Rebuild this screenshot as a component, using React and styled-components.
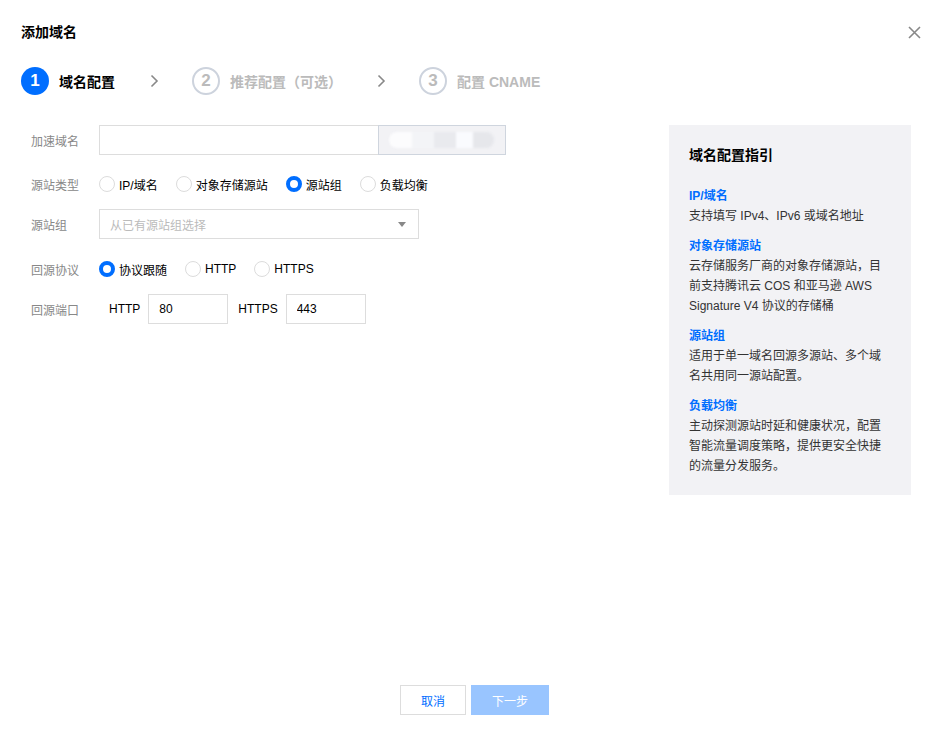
import React from "react";
import styled, { createGlobalStyle, css } from "styled-components";

const Global = createGlobalStyle`
  html, body { margin: 0; padding: 0; background: #fff; }
  body { font-family: "Liberation Sans", "Noto Sans CJK SC", sans-serif; color: #000; }
  * { box-sizing: border-box; }
`;

const BLUE = "#006eff";

const Dialog = styled.div`
  width: 939px;
  height: 733px;
  display: flex;
  flex-direction: column;
  padding: 0 18px 0 21px;
  position: relative;
`;

const Header = styled.div`
  display: flex;
  align-items: center;
  justify-content: space-between;
  padding-top: 20px;
  height: 44px;
`;

const Title = styled.h1`
  margin: 0;
  font-size: 14px;
  font-weight: 700;
  line-height: 24px;
`;

const CloseBtn = styled.button`
  border: none;
  background: none;
  padding: 0;
  width: 14px;
  height: 14px;
  display: flex;
  align-items: center;
  justify-content: center;
  cursor: pointer;
`;

const Steps = styled.div`
  display: flex;
  align-items: center;
  margin-top: 23px;
  height: 28px;
`;

const Step = styled.div`
  display: flex;
  align-items: center;
  gap: 10px;
`;

const StepNum = styled.span`
  width: 28px;
  height: 28px;
  border-radius: 50%;
  display: flex;
  align-items: center;
  justify-content: center;
  font-size: 17px;
  font-weight: 700;
  ${(p) =>
    p.$active
      ? css`background: ${BLUE}; color: #fff;`
      : css`border: 2px solid #cdd3dd; color: #bbb;`}
`;

const StepText = styled.span`
  font-size: 14px;
  font-weight: 700;
  color: ${(p) => (p.$active ? "#000" : "#bbb")};
`;

const StepSep = styled.span`
  display: flex;
  margin: 0 33px 0 35px;
`;

const Body = styled.div`
  display: flex;
  justify-content: space-between;
  margin-top: 30px;
  flex: 1;
`;

const Form = styled.div`
  display: flex;
  flex-direction: column;
  padding-left: 10px;
`;

const Row = styled.div`
  display: flex;
  align-items: center;
  min-height: 30px;
  margin-top: ${(p) => p.$mt || 0}px;
`;

const Label = styled.label`
  width: 68px;
  font-size: 12px;
  color: #888;
`;

const InputGroup = styled.div`
  display: flex;
  height: 30px;
`;

const Input = styled.input`
  width: ${(p) => p.$w}px;
  height: 30px;
  border: 1px solid #dddddd;
  padding: 0 10px;
  font-size: 12px;
  font-family: inherit;
  color: #000;
  outline: none;
  margin: 0;
`;

const Suffix = styled.div`
  width: 128px;
  height: 30px;
  margin-left: -1px;
  background: #f2f2f5;
  border: 1px solid #cfd5de;
  position: relative;
  overflow: hidden;
  display: flex;
  align-items: center;
  padding-left: 10px;
`;

const Blur = styled.div`
  width: 105px;
  height: 16px;
  border-radius: 8px;
  background: linear-gradient(90deg, #fcfcfd 0 22%, #f3f4f7 22% 43%, #e9eaee 43% 64%, #fafbfe 64% 80%, #e6e7eb 80%);
  filter: blur(1px);
`;

const Radios = styled.div`
  display: flex;
  align-items: center;
`;

const RadioItem = styled.label`
  display: flex;
  align-items: center;
  gap: 4px;
  margin-right: 18px;
  font-size: 12px;
  color: #000;
`;

const RadioDot = styled.span`
  width: 16px;
  height: 16px;
  border-radius: 50%;
  background: #fff;
  ${(p) =>
    p.$checked
      ? css`border: 4px solid ${BLUE};`
      : css`border: 1px solid #dcdcdc;`}
`;

const Select = styled.div`
  width: 320px;
  height: 30px;
  border: 1px solid #dddddd;
  display: flex;
  align-items: center;
  justify-content: space-between;
  padding: 0 12px 0 10px;
  font-size: 12px;
  color: #bbb;
`;

const Caret = styled.span`
  width: 0;
  height: 0;
  border-left: 4px solid transparent;
  border-right: 4px solid transparent;
  border-top: 5px solid #888;
`;

const PortLabel = styled.span`
  font-size: 12px;
  color: #000;
  padding: 0 8px 0 10px;
`;

const Guide = styled.aside`
  width: 242px;
  height: 370px;
  background: #f2f2f5;
  padding: 20px;
  margin-right: 10px;
`;

const GuideTitle = styled.h2`
  margin: 0 0 21px;
  font-size: 14px;
  font-weight: 700;
  line-height: 20px;
`;

const GuideItem = styled.div`
  margin-bottom: 10px;
`;

const GuideHead = styled.div`
  font-size: 12px;
  font-weight: 700;
  color: ${BLUE};
  line-height: 20px;
`;

const GuideDesc = styled.div`
  font-size: 12px;
  color: #333;
  line-height: 20px;
`;

const Footer = styled.div`
  display: flex;
  justify-content: center;
  gap: 5px;
  padding: 0 0 18px 7px;
`;

const Button = styled.button`
  height: 30px;
  padding: 0;
  font-size: 12px;
  font-family: inherit;
  cursor: pointer;
  ${(p) =>
    p.$primary
      ? css`width: 78px; background: #99c5ff; border: none; color: #fff;`
      : css`width: 66px; background: #fff; border: 1px solid #dddddd; color: ${BLUE};`}
`;

const Chevron = () => (
  <svg width="9" height="14" viewBox="0 0 9 14">
    <path d="M1.5 1.5 L7 7 L1.5 12.5" fill="none" stroke="#888" strokeWidth="1.6" />
  </svg>
);

const CloseIcon = () => (
  <svg width="13" height="13" viewBox="0 0 13 13">
    <path d="M1 1 L12 12 M12 1 L1 12" stroke="#888" strokeWidth="1.6" />
  </svg>
);

const steps = [
  { n: 1, t: "域名配置", active: true },
  { n: 2, t: "推荐配置（可选）" },
  { n: 3, t: "配置 CNAME" },
];

const guides = [
  { h: "IP/域名", d: "支持填写 IPv4、IPv6 或域名地址" },
  { h: "对象存储源站", d: "云存储服务厂商的对象存储源站，目前支持腾讯云 COS 和亚马逊 AWS Signature V4 协议的存储桶" },
  { h: "源站组", d: "适用于单一域名回源多源站、多个域名共用同一源站配置。" },
  { h: "负载均衡", d: "主动探测源站时延和健康状况，配置智能流量调度策略，提供更安全快捷的流量分发服务。" },
];

const Radio = ({ label, checked }) => (
  <RadioItem>
    <RadioDot $checked={checked} />
    {label}
  </RadioItem>
);

export default function App() {
  return (
    <>
      <Global />
      <Dialog>
        <Header>
          <Title>添加域名</Title>
          <CloseBtn aria-label="close">
            <CloseIcon />
          </CloseBtn>
        </Header>
        <Steps>
          {steps.map((s, i) => (
            <React.Fragment key={s.n}>
              {i > 0 && (
                <StepSep>
                  <Chevron />
                </StepSep>
              )}
              <Step>
                <StepNum $active={s.active}>{s.n}</StepNum>
                <StepText $active={s.active}>{s.t}</StepText>
              </Step>
            </React.Fragment>
          ))}
        </Steps>
        <Body>
          <Form>
            <Row>
              <Label>加速域名</Label>
              <InputGroup>
                <Input $w={280} />
                <Suffix>
                  <Blur />
                </Suffix>
              </InputGroup>
            </Row>
            <Row $mt={14}>
              <Label>源站类型</Label>
              <Radios>
                <Radio label="IP/域名" />
                <Radio label="对象存储源站" />
                <Radio label="源站组" checked />
                <Radio label="负载均衡" />
              </Radios>
            </Row>
            <Row $mt={10}>
              <Label>源站组</Label>
              <Select>
                从已有源站组选择
                <Caret />
              </Select>
            </Row>
            <Row $mt={15}>
              <Label>回源协议</Label>
              <Radios>
                <Radio label="协议跟随" checked />
                <Radio label="HTTP" />
                <Radio label="HTTPS" />
              </Radios>
            </Row>
            <Row $mt={10}>
              <Label>回源端口</Label>
              <PortLabel>HTTP</PortLabel>
              <Input $w={80} defaultValue="80" />
              <PortLabel>HTTPS</PortLabel>
              <Input $w={80} defaultValue="443" />
            </Row>
          </Form>
          <Guide>
            <GuideTitle>域名配置指引</GuideTitle>
            {guides.map((g) => (
              <GuideItem key={g.h}>
                <GuideHead>{g.h}</GuideHead>
                <GuideDesc>{g.d}</GuideDesc>
              </GuideItem>
            ))}
          </Guide>
        </Body>
        <Footer>
          <Button>取消</Button>
          <Button $primary>下一步</Button>
        </Footer>
      </Dialog>
    </>
  );
}
